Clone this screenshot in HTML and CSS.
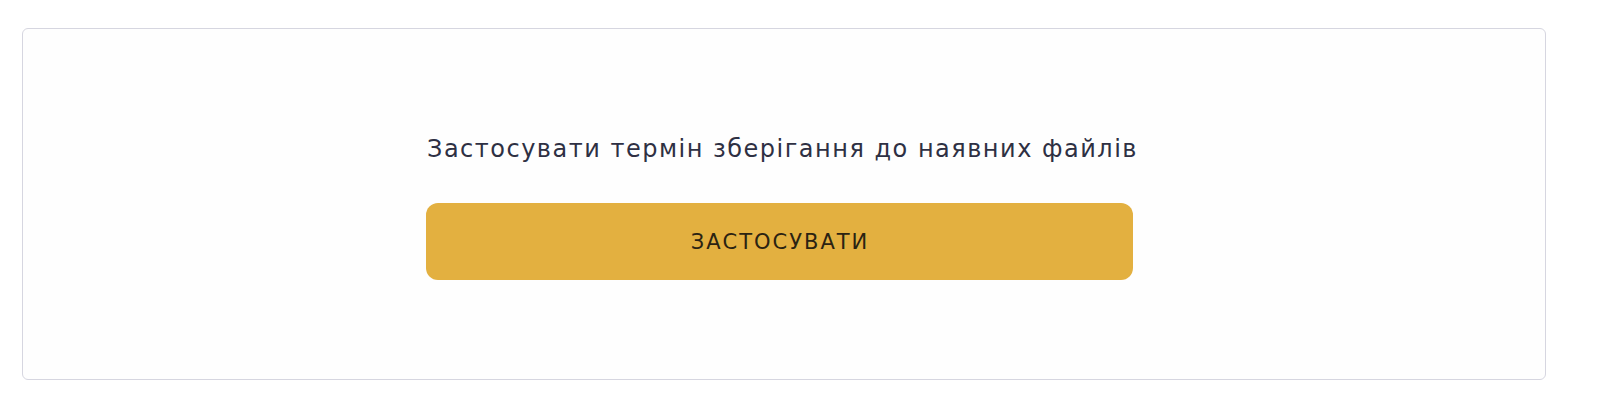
FILE: index.html
```html
<!DOCTYPE html>
<html lang="uk">
<head>
<meta charset="utf-8">
<link rel="stylesheet" href="styles.css">
</head>
<body>
<div class="card">
  <div class="content">
    <p class="label">Застосувати термін зберігання до наявних файлів</p>
    <button class="apply">ЗАСТОСУВАТИ</button>
  </div>
</div>
</body>
</html>
```

FILE: styles.css
```css
html, body {
  margin: 0;
  padding: 0;
  background: #ffffff;
}
body {
  padding: 28px 75px 0 22px;
  font-family: "DejaVu Sans", "Noto Sans", sans-serif;
}
.card {
  box-sizing: border-box;
  width: 1524px;
  height: 352px;
  border: 1.5px solid #d6d6e0;
  border-radius: 6px;
  background: #fefefe;
  display: flex;
  justify-content: center;
  padding-top: 101px;
}
.content {
  width: 707px;
  display: flex;
  flex-direction: column;
  align-items: stretch;
  position: relative;
  left: -5px;
}
.label {
  margin: 0;
  text-align: center;
  font-size: 24px;
  line-height: 38px;
  color: #2e3043;
  letter-spacing: 1.5px;
  white-space: nowrap;
  padding-left: 1.5px;
}
.apply {
  margin-top: 35px;
  height: 77px;
  border: none;
  border-radius: 12px;
  background: #e3b040;
  color: #2b2312;
  font-family: "DejaVu Sans", "Noto Sans", sans-serif;
  font-size: 21px;
  letter-spacing: 2px;
  padding: 0 0 0 2px;
}
```
